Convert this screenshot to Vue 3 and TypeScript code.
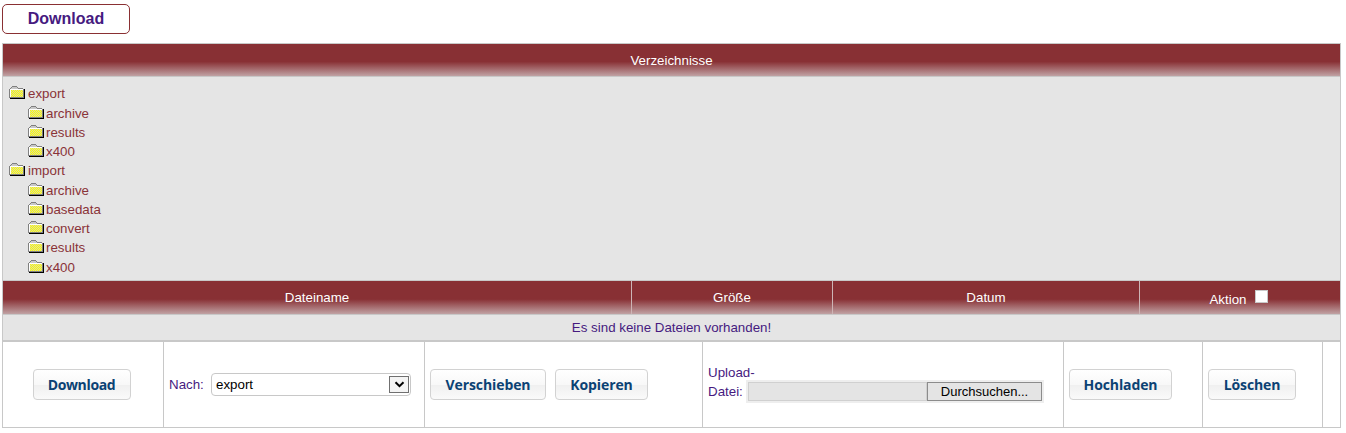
<template>
  <div class="page">
    <div class="top-bar">
      <button class="top-download" type="button">Download</button>
    </div>

    <div class="panel">
      <div class="band dirs-head">Verzeichnisse</div>

      <div class="tree">
        <div
          v-for="node in tree"
          :key="node.id"
          class="tree-row"
          :class="{ 'is-child': node.child, 'is-tall': node.tall }"
        >
          <svg class="folder" width="16" height="13" viewBox="0 0 16 13" shape-rendering="crispEdges" aria-hidden="true">
            <defs>
              <pattern :id="'dither-' + node.id" width="2" height="2" patternUnits="userSpaceOnUse">
                <rect width="2" height="2" fill="#ffff00" />
                <rect x="1" width="1" height="1" fill="#d8d8a8" />
                <rect y="1" width="1" height="1" fill="#d8d8a8" />
              </pattern>
            </defs>
            <!-- tab -->
            <path d="M2 2V1H3V0H7V1H8V2H14V3H2Z" fill="#c8c8c8" />
            <path d="M1 3V2H2V1H3V0H8V1H9V2H14V3H9V2H8V1H7V1H3V2H2V3Z" fill="#808080" />
            <!-- body -->
            <rect x="0" y="3" width="15" height="9" fill="#808080" />
            <rect x="1" y="3" width="13" height="8" fill="#ffffff" />
            <rect x="2" y="4" width="12" height="7" :fill="'url(#dither-' + node.id + ')'" />
            <!-- shadow -->
            <path d="M15 3H16V13H1V12H15Z" fill="#000000" />
          </svg>
          <span class="tree-label">{{ node.name }}</span>
        </div>
      </div>

      <div class="band files-head">
        <div class="col col-name">Dateiname</div>
        <div class="col col-size">Größe</div>
        <div class="col col-date">Datum</div>
        <div class="col col-action">
          <span class="action-label">Aktion</span>
          <span class="check"></span>
        </div>
      </div>

      <div class="empty">Es sind keine Dateien vorhanden!</div>

      <div class="actions">
        <div class="cell cell-download">
          <button class="btn btn-download" type="button">Download</button>
        </div>
        <div class="cell cell-target">
          <span class="field-label">Nach:</span>
          <div class="select">
            <span>export</span>
            <span class="select-arrow">
              <svg width="11" height="7" viewBox="0 0 11 7" aria-hidden="true">
                <path d="M1.5 1.2L5.5 5.2L9.5 1.2" fill="none" stroke="#000" stroke-width="2" />
              </svg>
            </span>
          </div>
        </div>
        <div class="cell cell-move">
          <button class="btn btn-move" type="button">Verschieben</button>
          <button class="btn btn-copy" type="button">Kopieren</button>
        </div>
        <div class="cell cell-upload">
          <div class="upload-label">Upload-</div>
          <div class="upload-row">
            <span class="upload-label file-label">Datei:</span>
            <div class="file-input">
              <span class="file-path"></span>
              <span class="file-browse">Durchsuchen...</span>
            </div>
          </div>
        </div>
        <div class="cell cell-send">
          <button class="btn btn-send" type="button">Hochladen</button>
        </div>
        <div class="cell cell-delete">
          <button class="btn btn-delete" type="button">Löschen</button>
        </div>
        <div class="cell cell-rest"></div>
      </div>
    </div>
  </div>
</template>

<script setup lang="ts">
interface TreeNode {
  id: number;
  name: string;
  child: boolean;
  tall?: boolean;
}

const tree: TreeNode[] = [
  { id: 1, name: "export", child: false },
  { id: 2, name: "archive", child: true, tall: true },
  { id: 3, name: "results", child: true },
  { id: 4, name: "x400", child: true },
  { id: 5, name: "import", child: false },
  { id: 6, name: "archive", child: true, tall: true },
  { id: 7, name: "basedata", child: true },
  { id: 8, name: "convert", child: true },
  { id: 9, name: "results", child: true },
  { id: 10, name: "x400", child: true, tall: true }
];
</script>

<style>
html,
body {
  margin: 0;
  background: #fff;
}
</style>

<style scoped>
.page {
  width: 1346px;
  height: 433px;
  overflow: hidden;
  font-family: "Liberation Sans", Arial, sans-serif;
  font-size: 13.33px;
  box-sizing: border-box;
  padding: 4px 0 0 2px;
}

.top-bar {
  height: 39px;
}

.top-download {
  display: block;
  width: 128px;
  height: 30px;
  padding: 0;
  border: 1px solid #8a3033;
  border-radius: 5px;
  background: #fff;
  color: #461a7f;
  font: bold 16px "Liberation Sans", Arial, sans-serif;
}

.panel {
  width: 1339px;
  height: 385px;
  box-sizing: border-box;
  border: 1px solid #c8c8c8;
  background: #e5e5e5;
  display: flex;
  flex-direction: column;
}

.band {
  background: linear-gradient(to bottom, #883034 0, #883034 55%, #c0a2a4 100%);
  color: #fff;
}

.dirs-head {
  height: 32px;
  line-height: 34px;
  text-align: center;
  border-bottom: 1px solid #c8c8c8;
}

.tree {
  height: 203px;
  box-sizing: border-box;
  padding: 7px 0 0 6px;
}

.tree-row {
  height: 19px;
  display: flex;
  align-items: flex-end;
  gap: 3px;
  color: #8a3338;
  line-height: 19px;
}

.tree-row.is-child {
  padding-left: 19px;
}

.tree-row.is-child .tree-label {
  margin-left: -1px;
}

.tree-row.is-tall {
  height: 20px;
}

.folder {
  flex: none;
  margin-bottom: 4px;
}

.files-head {
  height: 33px;
  display: flex;
  border-top: 1px solid #c8c8c8;
  border-bottom: 1px solid #c8c8c8;
}

.col {
  display: flex;
  align-items: center;
  justify-content: center;
  box-sizing: border-box;
  border-right: 1px solid #cdb4b5;
}

.col-name { width: 629px; }
.col-size { width: 201px; }
.col-date { width: 307px; }
.col-action {
  flex: 1;
  border-right: 0;
  gap: 8px;
  padding-right: 3px;
}

.action-label {
  padding-top: 4px;
}

.check {
  width: 11px;
  height: 11px;
  background: #fff;
  border: 1px solid #c8c8c8;
  margin-top: -2px;
}

.empty {
  height: 25px;
  line-height: 25px;
  text-align: center;
  color: #461a7f;
  border-bottom: 2px solid #c8c8c8;
}

.actions {
  flex: 1;
  display: flex;
  background: #fff;
}

.cell {
  display: flex;
  align-items: center;
  box-sizing: border-box;
  border-right: 1px solid #c8c8c8;
}

.cell-download {
  width: 161px;
  justify-content: center;
  padding-right: 3px;
}

.cell-target {
  width: 261px;
  padding-left: 5px;
  color: #461a7f;
}

.cell-move {
  width: 278px;
  padding-left: 5px;
  gap: 9px;
}

.cell-upload {
  width: 361px;
  padding: 21px 0 0 5px;
  display: block;
}

.cell-send {
  width: 139px;
  padding-left: 5px;
}

.cell-delete {
  width: 120px;
  padding-left: 5px;
}

.cell-rest {
  flex: 1;
  border-right: 0;
}

.btn {
  height: 31px;
  padding: 0;
  border: 1px solid #d2d2d2;
  border-radius: 4px;
  background: linear-gradient(to bottom, #ffffff 0, #f8f8f8 50%, #f0f0f0 52%, #fafafa 100%);
  color: #0b4274;
  font: bold 14px "Open Sans", sans-serif;
  letter-spacing: -0.1px;
}

.btn-download { width: 98px; letter-spacing: -0.35px; }
.btn-move { width: 116px; }
.btn-copy { width: 93px; }
.btn-send { width: 103px; }
.btn-delete { width: 88px; }

.field-label {
  width: 42px;
  flex: none;
}

.select {
  width: 200px;
  height: 23px;
  box-sizing: border-box;
  border: 1px solid #c8c8c8;
  border-radius: 4px;
  background: #fff;
  display: flex;
  align-items: center;
  justify-content: space-between;
  padding: 0 1px 0 4px;
  color: #000;
}

.select-arrow {
  width: 20px;
  height: 17px;
  box-sizing: border-box;
  border: 1px solid #707070;
  background: #f4f4f4;
  display: flex;
  align-items: center;
  justify-content: center;
}

.upload-label {
  color: #461a7f;
  line-height: 19px;
}

.upload-row {
  display: flex;
  align-items: center;
  height: 19px;
}

.file-label {
  width: 38px;
  flex: none;
}

.file-input {
  width: 298px;
  height: 23px;
  flex: none;
  box-sizing: border-box;
  padding: 2px;
  background: #eeeeee;
  display: flex;
}

.file-path {
  width: 179px;
  border: 1px solid #d0d0d0;
  background: #e4e4e4;
  box-sizing: border-box;
}

.file-browse {
  flex: 1;
  box-sizing: border-box;
  border: 1px solid #8c8c8c;
  background: #e4e4e4;
  color: #000;
  text-align: center;
  line-height: 18px;
  font-size: 13px;
}
</style>
